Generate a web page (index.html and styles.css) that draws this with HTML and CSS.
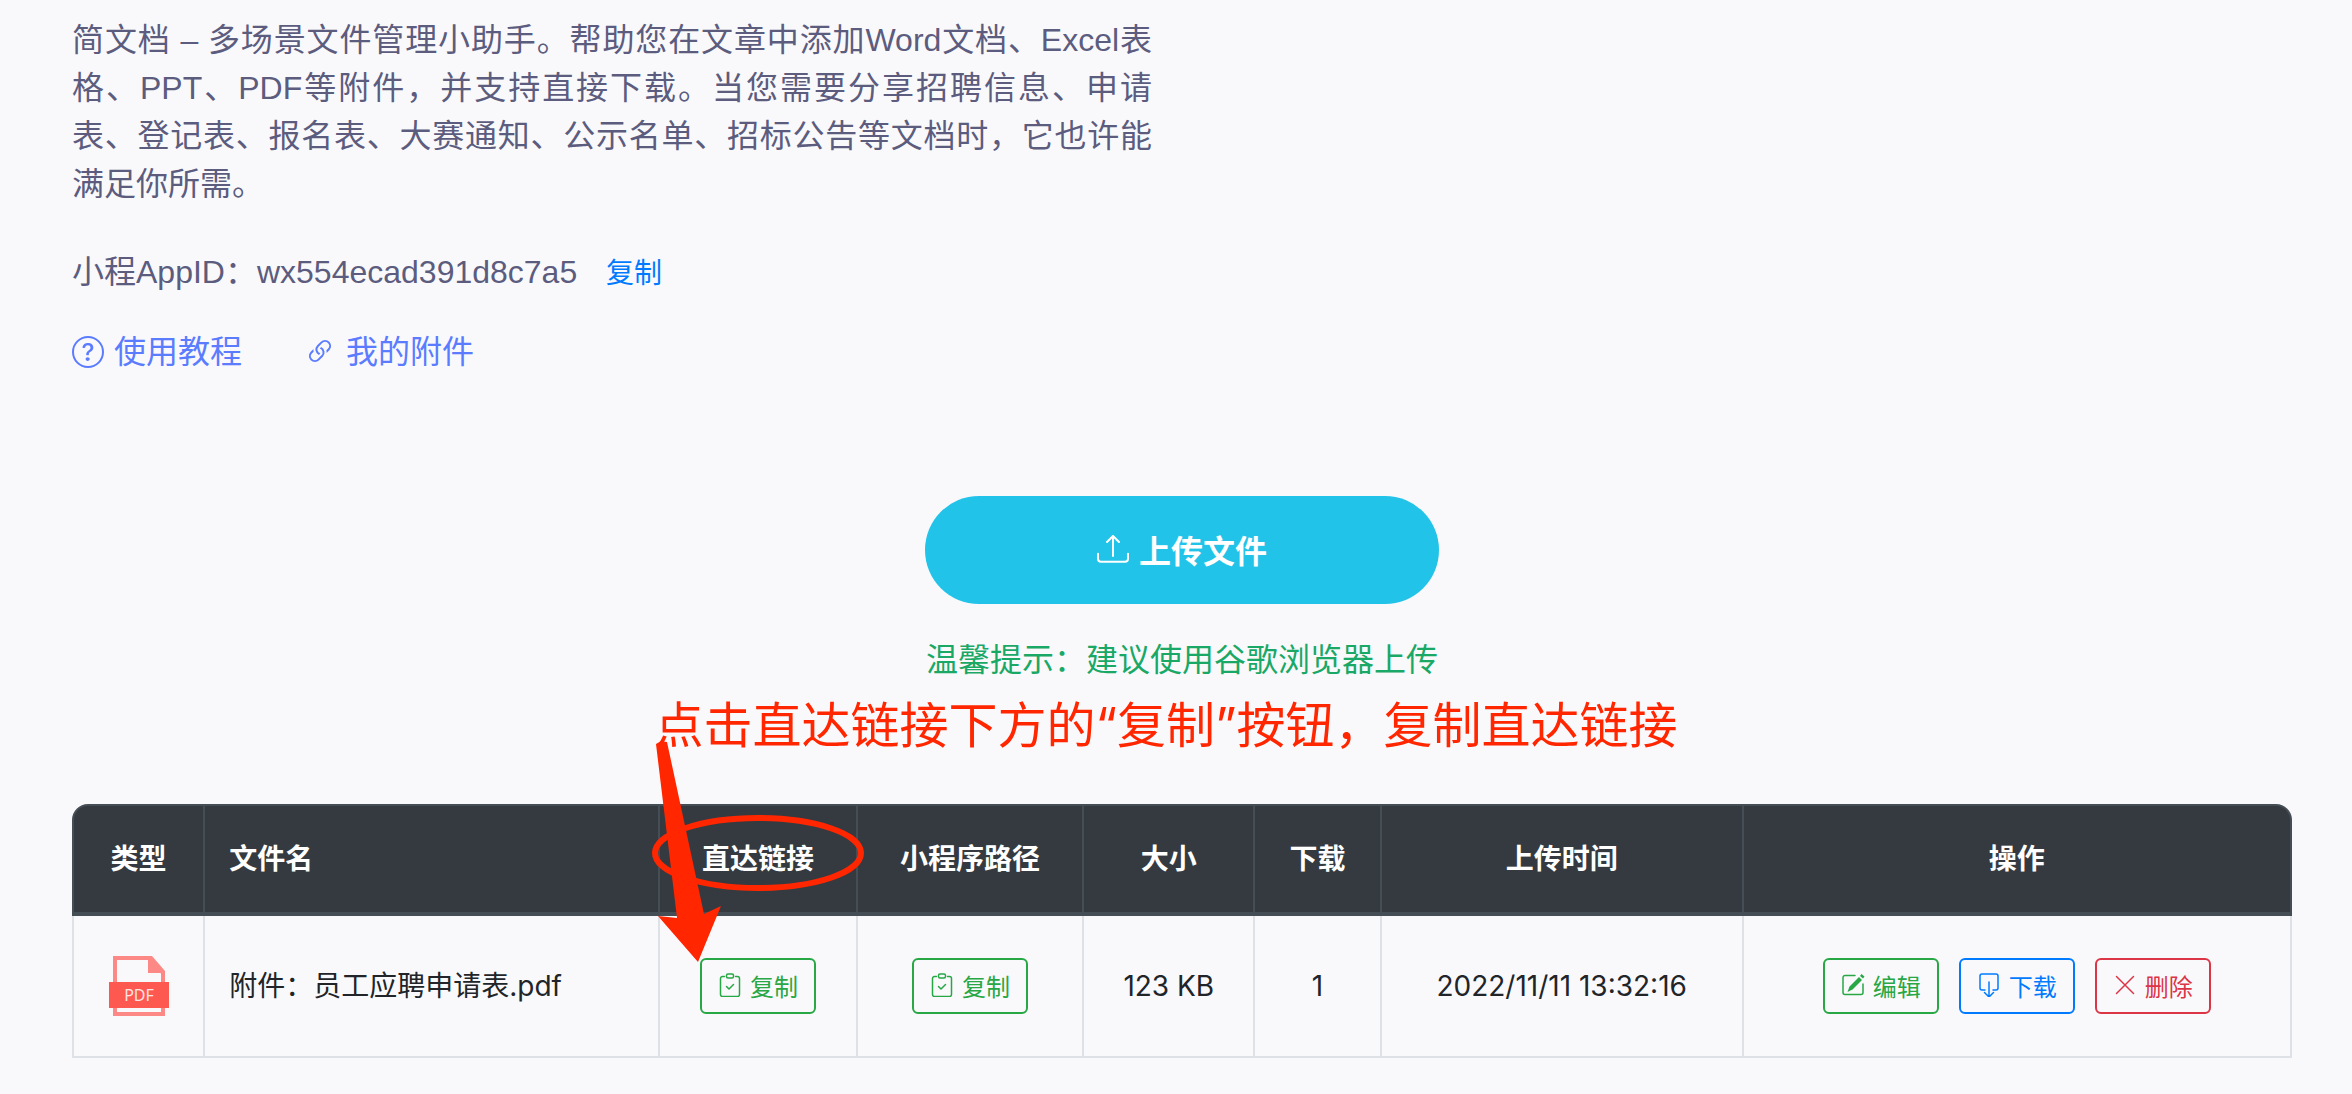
FILE: index.html
```html
<!DOCTYPE html>
<html lang="zh-CN">
<head>
  <meta charset="UTF-8">
  <meta name="viewport" content="width=device-width, initial-scale=1.0">
  <title>简文档</title>

  <link rel="stylesheet" href="styles.css">
</head>
<body>
  <!-- shared icons -->
  <svg class="sprite" aria-hidden="true">
    <symbol id="icon-copy" viewBox="0 0 24 24">
      <path d="M6.500 3.500H4.500a2 2 0 0 0-2 2v16a2 2 0 0 0 2 2h15a2 2 0 0 0 2-2v-16a2 2 0 0 0-2-2h-2" />
      <rect x="8.500" y="1" width="7" height="4" rx="1.500" />
      <path d="M8.500 13.500l2.500 2.500 4.500-4.500" />
    </symbol>
  </svg>

  <main>
    <header class="intro">
      <p class="description">简文档 – 多场景文件管理小助手。帮助您在文章中添加Word文档、Excel表格、PPT、PDF等附件，并支持直接下载。当您需要分享招聘信息、申请表、登记表、报名表、大赛通知、公示名单、招标公告等文档时，它也许能满足你所需。</p>

      <p class="appid">小程AppID：wx554ecad391d8c7a5 <a href="#">复制</a></p>

      <nav>
        <a href="#">
          <svg class="icon filled" viewBox="0 0 16 16">
            <path d="M8 15A7 7 0 1 1 8 1a7 7 0 0 1 0 14zm0 1A8 8 0 1 0 8 0a8 8 0 0 0 0 16z" />
            <path d="M5.255 5.786a.237.237 0 0 0 .241.247h.825c.138 0 .248-.113.266-.25.09-.656.54-1.134 1.342-1.134.686 0 1.314.343 1.314 1.168 0 .635-.374.927-.965 1.371-.673.489-1.206 1.06-1.168 1.987l.003.217a.25.25 0 0 0 .25.246h.811a.25.25 0 0 0 .25-.25v-.105c0-.718.273-.927 1.01-1.486.609-.463 1.244-.977 1.244-2.056 0-1.511-1.276-2.241-2.673-2.241-1.267 0-2.655.59-2.75 2.286zm1.557 5.763c0 .533.425.927 1.01.927.609 0 1.028-.394 1.028-.927 0-.552-.42-.94-1.029-.94-.584 0-1.009.388-1.009.94z" />
          </svg>
          使用教程
        </a>
        <a href="#">
          <svg class="icon filled" viewBox="0 0 16 16">
            <path d="M4.715 6.542 3.343 7.914a3 3 0 1 0 4.243 4.243l1.828-1.829A3 3 0 0 0 8.586 5.5L8 6.086a1.002 1.002 0 0 0-.154.199 2 2 0 0 1 .861 3.337L6.88 11.45a2 2 0 1 1-2.83-2.83l.793-.792a4.018 4.018 0 0 1-.128-1.287z" />
            <path d="M6.586 4.672A3 3 0 0 0 7.414 9.5l.775-.776a2 2 0 0 1-.896-3.346L9.12 3.55a2 2 0 1 1 2.83 2.83l-.793.792c.112.42.155.855.128 1.287l1.372-1.372a3 3 0 1 0-4.243-4.243L6.586 4.672z" />
          </svg>
          我的附件
        </a>
      </nav>
    </header>

    <section class="upload">
      <button class="btn-upload">
        <svg class="icon filled" viewBox="0 0 16 16">
          <path d="M.5 9.900a.5.5 0 0 1 .5.5v2.500a1 1 0 0 0 1 1h12a1 1 0 0 0 1-1v-2.500a.5.5 0 0 1 1 0v2.500a2 2 0 0 1-2 2H2a2 2 0 0 1-2-2v-2.500a.5.5 0 0 1 .5-.5z" />
          <path d="M7.646 1.146a.5.5 0 0 1 .708 0l3 3a.5.5 0 0 1-.708.708L8.500 2.707V11.500a.5.5 0 0 1-1 0V2.707L5.354 4.854a.5.5 0 1 1-.708-.708l3-3z" />
        </svg>
        上传文件
      </button>
      <p class="tip">温馨提示：建议使用谷歌浏览器上传</p>
      <p class="note">点击直达链接下方的“复制”按钮，复制直达链接</p>
    </section>

    <table>
      <colgroup>
        <col class="col-type">
        <col class="col-name">
        <col class="col-link">
        <col class="col-path">
        <col class="col-size">
        <col class="col-count">
        <col class="col-time">
        <col class="col-action">
      </colgroup>
      <thead>
        <tr>
          <th>类型</th>
          <th class="name">文件名</th>
          <th class="marked">
            直达链接
            <svg class="marker" viewBox="0 0 216 228" aria-hidden="true">
              <ellipse cx="108" cy="115" rx="103" ry="35" />
              <path d="M6 6l5-3 6 1 37 172 17-8-23 56-40-46 19 2z" />
            </svg>
          </th>
          <th>小程序路径</th>
          <th>大小</th>
          <th>下载</th>
          <th>上传时间</th>
          <th>操作</th>
        </tr>
      </thead>
      <tbody>
        <tr>
          <td>
            <svg class="file-icon" viewBox="0 0 60 60" role="img" aria-label="PDF">
              <path class="page" d="M6 2h34l14 15v41H6z" />
              <path class="fold" d="M39 0h4l13 15v2H39z" />
              <path class="band" d="M0 26h60v26H0z" />
              <text x="30" y="45">PDF</text>
            </svg>
          </td>
          <td class="name">附件：员工应聘申请表.pdf</td>
          <td>
            <button class="btn green"><svg class="icon"><use href="#icon-copy" /></svg>复制</button>
          </td>
          <td>
            <button class="btn green"><svg class="icon"><use href="#icon-copy" /></svg>复制</button>
          </td>
          <td>123 KB</td>
          <td>1</td>
          <td>2022/11/11 13:32:16</td>
          <td>
            <div class="actions">
              <button class="btn green">
                <svg class="icon" viewBox="0 0 24 24">
                  <path d="M14 2.500H4a2 2 0 0 0-2 2v15a2 2 0 0 0 2 2h16a2 2 0 0 0 2-2V11" />
                  <path class="solid" d="M18 4l3 3-9.500 9.500-5 2.500 2-5.500zM20.500 1l3 2.500-1.500 2L19 3z" stroke="none" />
                </svg>编辑
              </button>
              <button class="btn blue">
                <svg class="icon" viewBox="0 0 24 24">
                  <path d="M8 17H5a2 2 0 0 1-2-2V3a2 2 0 0 1 2-2h14a2 2 0 0 1 2 2v12a2 2 0 0 1-2 2h-3M12 9v15M7.500 19.500L12 24l4.500-4.500" />
                </svg>下载
              </button>
              <button class="btn red">
                <svg class="icon" viewBox="0 0 24 24">
                  <path d="M3.500 3.500l17 17M20.500 3.500l-17 17" />
                </svg>删除
              </button>
            </div>
          </td>
        </tr>
      </tbody>
    </table>
  </main>
</body>
</html>
```
FILE: styles.css
```css
* {
  margin: 0;
  padding: 0;
  box-sizing: border-box;
}

body, button {
  font-family: Inter, 'Noto Sans CJK SC', sans-serif;
}

body {
  background: #f9f9fc;
  color: #212529;
  font-size: 28px;
}

a {
  color: #007bff;
  text-decoration: none;
}

button {
  cursor: pointer;
}

main {
  padding: 16px 60px 36px 72px;
}

.sprite {
  position: absolute;
  width: 0;
  height: 0;
}

.icon {
  width: 32px;
  height: 32px;
  flex: none;
  fill: none;
  stroke: currentColor;
  stroke-width: 2;
  stroke-linecap: round;
  stroke-linejoin: round;
}

.icon .solid {
  fill: currentColor;
}

.icon.filled {
  fill: currentColor;
  stroke: none;
}

.intro {
  color: #5c5c7e;
  font-family: 'Liberation Sans', 'Noto Sans CJK SC', sans-serif;
  font-size: 32px;
  line-height: 48px;
}

.description {
  max-width: 1080px;
  text-align: justify;
}

.appid {
  margin-top: 40px;
}

.appid a {
  margin-left: 20px;
  font-size: 28px;
}

.intro nav {
  display: flex;
  gap: 62px;
  margin-top: 30px;
}

.intro nav a {
  display: flex;
  align-items: center;
  gap: 10px;
  color: #5b7cff;
}

.upload {
  display: flex;
  flex-direction: column;
  align-items: center;
  margin-top: 120px;
}

.btn-upload {
  display: flex;
  align-items: center;
  justify-content: center;
  gap: 10px;
  width: 514px;
  height: 108px;
  padding-bottom: 2px;
  border: none;
  border-radius: 54px;
  background: #22c3e8;
  color: #ffffff;
  font-size: 32px;
  font-weight: 700;
}

.tip {
  margin-top: 32px;
  color: #1aa866;
  font-size: 32px;
  line-height: 48px;
}

.note {
  margin: 2px 32px 0 0;
  color: #ff2600;
  font-size: 49px;
  line-height: 80px;
}

table {
  width: 100%;
  margin-top: 38px;
  table-layout: fixed;
  border-collapse: separate;
  border-spacing: 0;
}

.col-type { width: 6%; }
.col-name { width: 20.5%; }
.col-link { width: 8.9%; }
.col-path { width: 10.2%; }
.col-size { width: 7.7%; }
.col-count { width: 5.7%; }
.col-time { width: 16.3%; }
.col-action { width: 24.7%; }

th, td {
  text-align: center;
  vertical-align: middle;
  line-height: 40px;
  border-right: 2px solid #dee2e6;
  border-bottom: 2px solid #dee2e6;
}

th {
  height: 112px;
  background: #343a40;
  color: #ffffff;
  font-weight: 700;
  border-color: #454d55;
  border-top: 2px solid #454d55;
  border-bottom-width: 4px;
}

td {
  height: 142px;
}

th:first-child, td:first-child {
  border-left: 2px solid #dee2e6;
}

th:first-child {
  border-left-color: #454d55;
  border-top-left-radius: 16px;
}

th:last-child {
  border-top-right-radius: 16px;
}

.name {
  padding-left: 24px;
  text-align: left;
}

/* hand drawn mark over the link column */
.marked {
  position: relative;
}

.marker {
  position: absolute;
  z-index: 1;
  top: -68px;
  left: -10px;
  width: 216px;
  height: 228px;
  fill: #ff2600;
  pointer-events: none;
}

.marker ellipse {
  fill: none;
  stroke: #ff2600;
  stroke-width: 6;
}

.file-icon {
  display: block;
  width: 60px;
  height: 60px;
  margin: 0 auto;
}

.file-icon .page {
  fill: none;
  stroke: #fc8986;
  stroke-width: 4;
}

.file-icon .fold {
  fill: #fc8986;
}

.file-icon .band {
  fill: #fd5951;
}

.file-icon text {
  fill: #ffe4e2;
  font-family: 'Noto Sans', sans-serif;
  font-size: 16px;
  text-anchor: middle;
}

.btn {
  display: inline-flex;
  align-items: center;
  gap: 8px;
  height: 56px;
  padding: 0 16px 2px;
  border: 2px solid currentColor;
  border-radius: 6px;
  background: transparent;
  font-size: 24px;
  vertical-align: middle;
}

.btn .icon {
  width: 24px;
  height: 24px;
  stroke-width: 1.5;
}

.green { color: #28a745; }
.blue { color: #007bff; }
.red { color: #dc3545; }

.actions {
  display: flex;
  justify-content: center;
  gap: 20px;
}
```
